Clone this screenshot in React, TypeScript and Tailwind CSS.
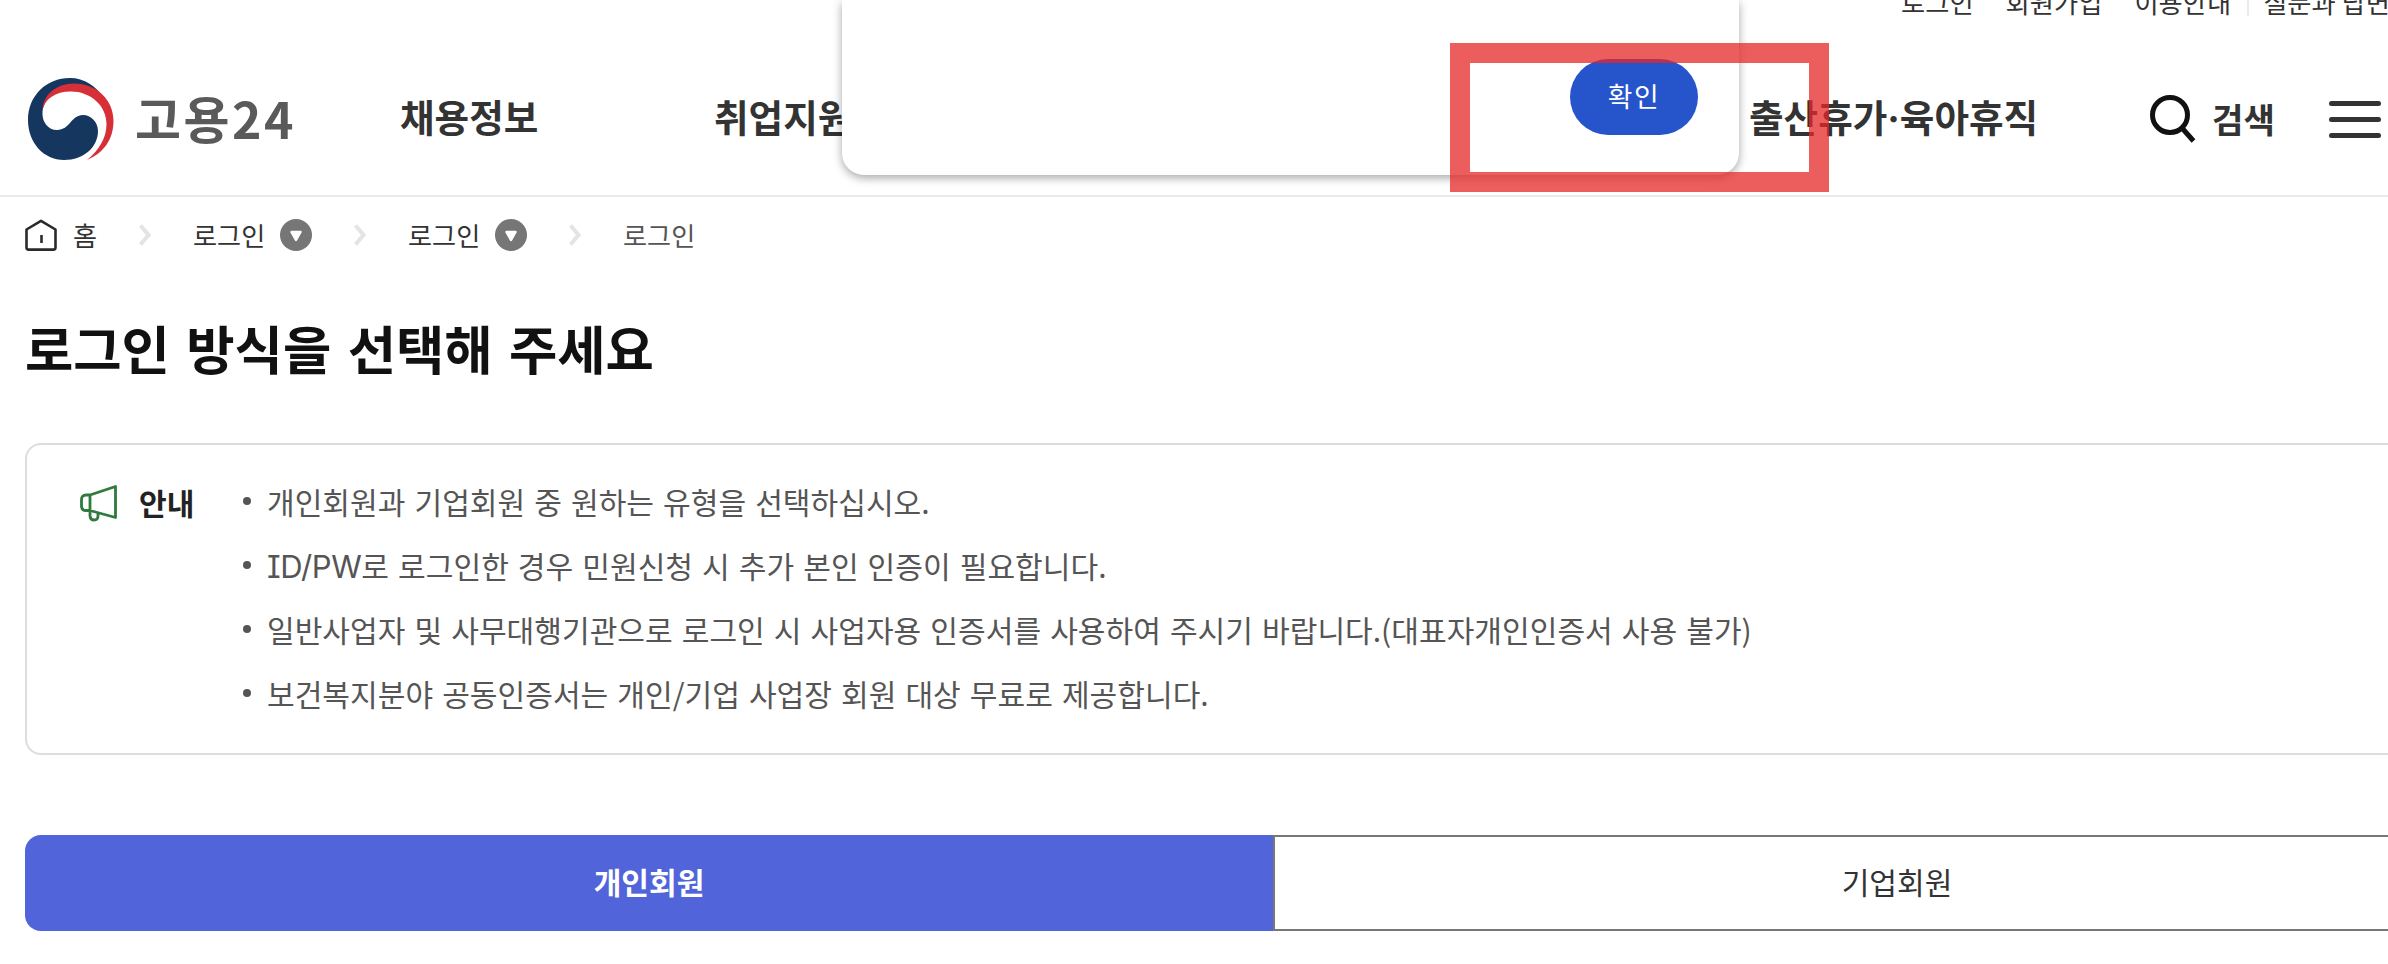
import React, { useState } from 'react';

const utilLinks = ['로그인', '회원가입', '이용안내'];

const LogoMark = () => (
  <svg className="h-[82px] w-[86px] shrink-0" viewBox="0 0 86 82" fill="none">
    <path
      d="M76 21C69 8 56 0 42 0C18 0 0 18 0 42C0 65 16 82 36 82C56 82 70 69 70 53C70 44 63 37 55 37C43 37 42 52 29 52C20 52 14.500 44 14.500 36C14.500 22 26 10 42 9C56 9 68 12 76 21Z"
      fill="#14365f"
    />
    <path
      d="M14.500 32C15 17 28 5.500 46 5.500C69 5.500 85.500 22 85.500 43C85.500 61 76 75 59 82C71 72 78.500 60 78.500 46C78.500 27 62 13.500 43 13.500C27 13.500 17 21 14.500 32Z"
      fill="#d62f38"
    />
  </svg>
);

const HomeIcon = () => (
  <svg className="h-8 w-8 shrink-0" viewBox="0 0 32 32" fill="none" stroke="#2a2a2a" strokeWidth="2.6" strokeLinejoin="round">
    <path d="M1.500 10.500L16 1.800L30.500 10.500V28.500Q30.500 30.600 28.500 30.600H3.500Q1.500 30.600 1.500 28.500Z" />
    <path d="M16.500 16V24" />
  </svg>
);

const Chevron = () => (
  <svg className="h-[22px] w-3 shrink-0" viewBox="0 0 12 22" fill="none" stroke="#e4e4e4" strokeWidth="4">
    <path d="M1.500 1.500L9.500 11L1.500 20.500" />
  </svg>
);

const DropdownMark = () => (
  <svg className="h-8 w-8 shrink-0" viewBox="0 0 32 32">
    <circle cx="16" cy="16" r="16" fill="#767676" />
    <path d="M11.500 13H20.500L16 21Z" fill="#fff" stroke="#fff" strokeWidth="2.500" strokeLinejoin="round" />
  </svg>
);

const MegaphoneIcon = () => (
  <svg className="h-[37px] w-[38px] shrink-0" viewBox="0 0 38 37" fill="none" stroke="#2f7a3d" strokeWidth="2.800" strokeLinejoin="round">
    <path d="M10 10L35.500 1.500V32.500L10 25.500Z" />
    <path d="M10 10H6Q1.500 10 1.500 14.500V21Q1.500 25.500 6 25.500H10" />
    <path d="M10 25.500V31Q10.500 35 14 35Q18 35 18 31V28" />
  </svg>
);

const notices = [
  <>개인회원과 기업회원 중 원하는 유형을 선택하십시오.</>,
  <>
    <span className="font-[Inter] text-[31px] tracking-[-0.4px] [font-feature-settings:'cv08']">ID/PW</span>
    로 로그인한 경우 민원신청 시 추가 본인 인증이 필요합니다.
  </>,
  <>일반사업자 및 사무대행기관으로 로그인 시 사업자용 인증서를 사용하여 주시기 바랍니다.(대표자개인인증서 사용 불가)</>,
  <>보건복지분야 공동인증서는 개인/기업 사업장 회원 대상 무료로 제공합니다.</>,
];

export default function App() {
  const [tab, setTab] = useState<'personal' | 'company'>('personal');

  return (
    <div className="relative h-[964px] w-full overflow-hidden bg-white font-['Noto_Sans_CJK_KR',sans-serif] text-[#333] whitespace-nowrap">
      <header className="-mt-4 h-[213px] border-b-2 border-[#ebebeb]">
        <div className="flex h-9 items-center pl-[1901px] text-[26.3px] leading-9">
          {utilLinks.map((label) => (
            <a key={label} className="mr-8">{label}</a>
          ))}
          <span className="-ml-[16px] mr-[14px] h-7 w-0.5 shrink-0 bg-[#ebebeb]" />
          <a>질문과 답변</a>
        </div>

        <div className="flex h-[82px] items-center mt-[58px] pl-[28px]">
          <LogoMark />
          <span className="ml-[21px] w-[265px] pb-1 text-[50px] leading-none font-bold tracking-[2.5px] text-[#5a5a5a]">고용24</span>
          <nav className="flex pb-1 text-[37.6px] leading-none font-bold">
            <a className="w-[314px]">채용정보</a>
            <a className="w-[1035px]">취업지원</a>
            <a className="w-[399px]">
              출산휴가<span className="font-[Inter]">·</span>육아휴직
            </a>
          </nav>
          <button className="flex items-center">
            <svg className="h-[50px] w-[48px]" viewBox="0 0 48 50" fill="none" stroke="#111" strokeWidth="5">
              <circle cx="22" cy="21" r="17.500" />
              <path d="M34 34L45.500 47" />
            </svg>
            <span className="ml-4 w-[63px] pb-0.5 text-left text-[34.2px] leading-none font-bold">검색</span>
          </button>
          <button className="ml-[54px] flex w-[52px] shrink-0 flex-col gap-[11px]">
            <span className="h-[5px] rounded-full bg-[#333]" />
            <span className="h-[5px] rounded-full bg-[#333]" />
            <span className="h-[5px] rounded-full bg-[#333]" />
          </button>
        </div>
      </header>

      <main className="box-content w-[2498px] pl-[25px]">
        <div className="mt-[22px] flex h-8 items-center text-[26.2px] leading-8">
          <HomeIcon />
          <span className="ml-4 w-[66px]">홈</span>
          <Chevron />
          <span className="ml-[42px] w-[87px]">로그인</span>
          <DropdownMark />
          <span className="w-[42px]" />
          <Chevron />
          <span className="ml-[42px] w-[87px]">로그인</span>
          <DropdownMark />
          <span className="w-[42px]" />
          <Chevron />
          <span className="ml-[42px] text-[#555]">로그인</span>
        </div>

        <h1 className="mt-[61px] text-[52.5px] leading-[70px] font-bold text-[#111] [word-spacing:4.5px]">
          로그인 방식을 선택해 주세요
        </h1>

        <section className="mt-[61px] flex h-[312px] rounded-2xl border-2 border-[#ddd] pt-[26px] pl-[53px]">
          <div className="flex h-16 items-center">
            <MegaphoneIcon />
            <strong className="ml-[21px] w-[104px] text-[30.1px] font-bold text-[#222]">안내</strong>
          </div>
          <ul className="text-[30.1px] leading-[60px] text-[#555] [word-spacing:2.3px]">
            {notices.map((notice, i) => (
              <li key={i} className="flex h-16 items-center">
                <span className="mr-4 mb-1 h-2 w-2 rounded-full bg-[#555]" />
                <p className="h-16">{notice}</p>
              </li>
            ))}
          </ul>
        </section>

        <div className="mt-20 flex h-24 text-[30.1px]">
          <button
            onClick={() => setTab('personal')}
            className={
              tab === 'personal'
                ? 'w-[1248px] rounded-l-2xl bg-[#5164d9] pb-0.5 font-bold text-white'
                : 'w-[1248px] rounded-l-2xl border-2 border-[#777]'
            }
          >
            개인회원
          </button>
          <button
            onClick={() => setTab('company')}
            className={
              tab === 'company'
                ? 'w-[1250px] rounded-r-2xl bg-[#5164d9] font-bold text-white'
                : 'w-[1250px] rounded-r-2xl border-2 border-[#777] pr-0.5 pb-0.5'
            }
          >
            기업회원
          </button>
        </div>
      </main>

      {/* bottom edge of the alert dialog */}
      <div className="absolute top-0 left-[842px] flex h-[175px] w-[897px] items-end justify-end rounded-b-[22px] bg-white pr-[41px] pb-10 shadow-[0_3px_10px_rgba(0,0,0,0.35)]">
        <button className="h-[76px] w-32 rounded-full bg-[#2655cb] pb-0.5 text-[26.8px] tracking-[1.5px] text-white">확인</button>
      </div>

      <div className="pointer-events-none absolute top-[43px] left-[1450px] h-[149px] w-[379px] border-20 border-[#e52828]/75" />
    </div>
  );
}
